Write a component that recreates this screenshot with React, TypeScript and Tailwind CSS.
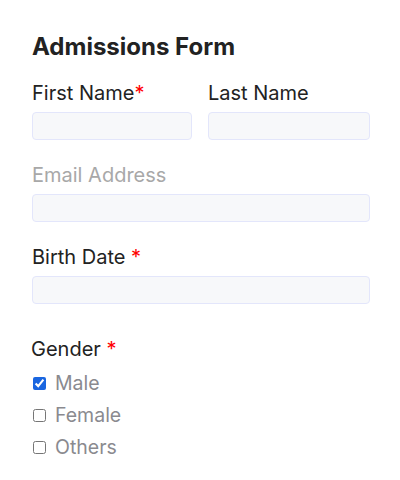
import { useState } from 'react'

function Req() {
  return <span className="text-[#ff0000]">*</span>
}

export default function App() {
  const [gender, setGender] = useState<Record<string, boolean>>({ Male: true, Female: false, Others: false })

  return (
    <div className="min-h-screen bg-white font-['Inter',sans-serif] text-[#222]">
      <div className="pl-[32px] pr-[30px] pt-[33px]">
        <h1 className="text-[24px] font-bold leading-[28px] text-[#222]">Admissions Form</h1>

        <div className="mt-[20px] grid grid-cols-[160px_1fr] gap-x-[16px]">
          <div>
            <label className="block text-[20px] leading-[24px]">
              First Name<Req />
            </label>
            <input className="mt-[7px] block h-[28px] w-full rounded-[4px] border border-[#e3e6fb] bg-[#f7f8fa]" />
          </div>
          <div>
            <label className="block text-[20px] leading-[24px]">Last Name</label>
            <input className="mt-[7px] block h-[28px] w-full rounded-[4px] border border-[#e3e6fb] bg-[#f7f8fa]" />
          </div>
        </div>

        <div className="mt-[23px]">
          <label className="block text-[20px] leading-[24px] text-[#a8a8a8]">Email Address</label>
          <input className="mt-[7px] block h-[28px] w-full rounded-[4px] border border-[#e3e6fb] bg-[#f7f8fa]" />
        </div>

        <div className="mt-[23px]">
          <label className="block text-[20px] leading-[24px]">
            Birth Date <Req />
          </label>
          <input className="mt-[7px] block h-[28px] w-full rounded-[4px] border border-[#e3e6fb] bg-[#f7f8fa]" />
        </div>

        <div className="-ml-[1px] mt-[33px]">
          <div className="text-[20px] leading-[24px]">
            Gender <Req />
          </div>
          <div className="mt-[6px] flex flex-col">
            {['Male', 'Female', 'Others'].map((g) => (
              <label key={g} className="flex h-[32px] items-center gap-[9px] pl-[2px]">
                <input
                  type="checkbox"
                  checked={gender[g]}
                  onChange={() => setGender({ ...gender, [g]: !gender[g] })}
                  className="m-0 h-[13px] w-[13px] accent-[#1a66e0]"
                />
                <span className="text-[19.5px] leading-[24px] text-[#8a8a8f]">{g}</span>
              </label>
            ))}
          </div>
        </div>
      </div>
    </div>
  )
}
